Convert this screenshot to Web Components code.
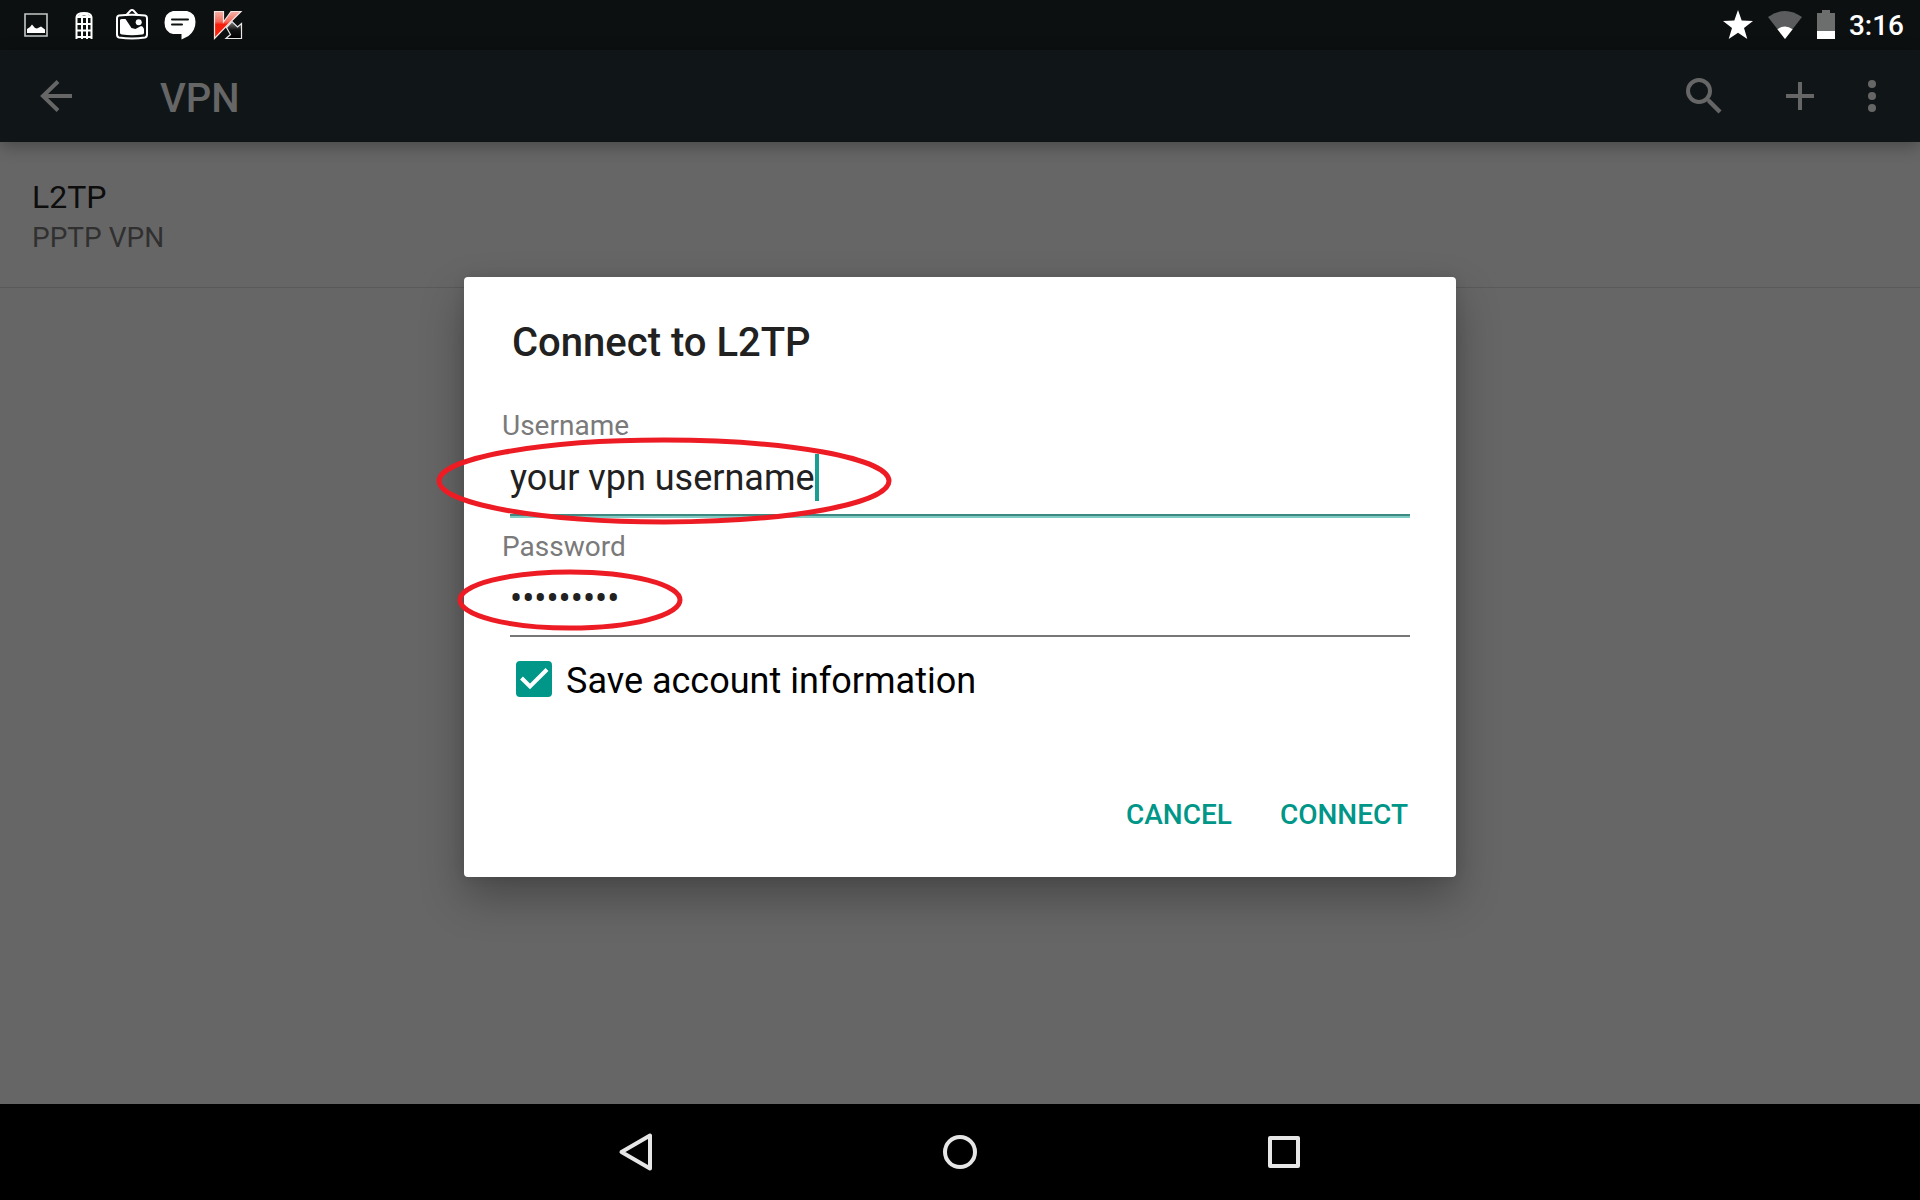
<!DOCTYPE html>
<html lang="en">
<head>
<meta charset="utf-8">
<title>VPN</title>
<style>
  html, body { height: 100%; margin: 0; }
  body { font-family: Roboto, "Noto Sans", sans-serif; background: #666; }
</style>
</head>
<body>
<vpn-screen></vpn-screen>

<script>
const define = (name, html, setup) => {
  const template = document.createElement('template');
  template.innerHTML = html;
  customElements.define(name, class extends HTMLElement {
    constructor() {
      super();
      this.attachShadow({ mode: 'open' }).append(template.content.cloneNode(true));
    }
    connectedCallback() {
      if (setup) setup(this, this.shadowRoot);
    }
  });
};

define('status-bar', `
  <style>
    :host { display: flex; align-items: center; justify-content: space-between; height: 50px;
      padding: 0 16px 0 20px; background: #0c1011; color: #fff; }
    .group { display: flex; align-items: center; gap: 16px; }
    .system { gap: 13px; }
    svg { display: block; }
    time { font-size: 28px; line-height: 36px; font-weight: 500; padding-top: 2px; }
  </style>
  <div class="group">
    <svg width="32" height="32" viewBox="0 0 32 32"><path d="M5 5h22v22H5z" fill="none" stroke="#c4c7c6" stroke-width="1.6"/><path d="M7 24v-4l3-2 2-2.500 3 3.500 2 .5 4-2 4 3V24z" fill="#fff"/></svg>
    <svg width="32" height="32" viewBox="0 0 32 32"><path d="M8.500 30V8Q9 4 16 4t7.500 4v22M14 30V9M19 30V9M8 8h16M8 15h16M8 21.500h16M8 28h16M10 8q6-5 12 0" fill="none" stroke="#fff" stroke-width="2"/></svg>
    <svg width="32" height="32" viewBox="0 0 32 32"><path d="M10 6.500 14.500 1.500q1.500-1 3 0L22 6.500" fill="none" stroke="#fff" stroke-width="2"/><path d="M3 6.500Q16 5.200 29 6.500q2 .3 2 3v16q0 2.500-2 3-13 2-26 0-2-.5-2-3v-16q0-2.700 2-3z" fill="none" stroke="#fff" stroke-width="2"/><path d="M4 11q.4-1 2-1h3.500l6 9 4 1 5.500-3q2 0 3 3v4q-.4 1.600-2 1.600-10 1.300-20 0-2-.2-2-1.600z" fill="#fff"/><circle cx="22.700" cy="13.300" r="3" fill="#fff"/></svg>
    <svg width="32" height="32" viewBox="0 0 32 32"><path d="M9 2h14q8.500 2 8.500 11 0 8.500-7 14l-7 3.500V25H9Q.5 23 .5 13.500T9 2z" fill="#fff"/><path d="M8 10.500h16M8 15.500h10" stroke="#0c1011" stroke-width="2" stroke-linecap="round"/></svg>
    <svg width="32" height="32" viewBox="0 0 32 32">
      <defs>
        <linearGradient id="red" x1="0" y1="0" x2="0" y2="1"><stop offset="0" stop-color="#f3b3a7"/><stop offset=".38" stop-color="#f5685a"/><stop offset=".48" stop-color="#f51e0c"/><stop offset="1" stop-color="#f42b10"/></linearGradient>
        <linearGradient id="dark" x1="0" y1="0" x2="0" y2="1"><stop offset="0" stop-color="#888"/><stop offset=".5" stop-color="#111"/><stop offset="1" stop-color="#000"/></linearGradient>
      </defs>
      <path d="M14.500 18.500 20 12.500l5.500 5.500 4-3.500v15H14l4.500-4z" fill="url(#dark)" stroke="#e8e8e8" stroke-width="1.200"/>
      <path d="M2.500 2.500h9V13l7.500-10.500h10L15 16.500 2.500 29.500z" fill="url(#red)" stroke="#f5e6e3" stroke-width="1.200"/>
    </svg>
  </div>
  <div class="group system">
    <svg width="32" height="32" viewBox="0 0 32 32"><path d="M16 1l3.700 10.600L31 12l-9 7 3.300 11L16 23.700 6.700 30 10 19l-9-7 11.300-.4z" fill="#fff"/></svg>
    <svg width="36" height="32" viewBox="0 0 36 32"><path d="M1 8Q18-4 35 8L18 30z" fill="#5a5c5d"/><path d="M10.400 20.200q7.600-5.200 15.200 0L18 30z" fill="#fff"/></svg>
    <svg width="20" height="32" viewBox="0 0 20 32"><path d="M6 1h8v3h5v18H1V4h5z" fill="#6c6e6e"/><path d="M1 22h18v8H1z" fill="#fff"/></svg>
    <time>3:16</time>
  </div>
`);

define('app-bar', `
  <style>
    :host { display: flex; align-items: center; position: relative; height: 92px; padding: 0 24px;
      background: #101517; color: #666; box-shadow: 0 4px 16px rgba(0,0,0,.3); }
    button { border: 0; padding: 0; background: none; color: inherit; display: block; }
    svg { display: block; }
    h1 { flex: 1; margin: 0 0 0 72px; padding-top: 5px; font-size: 40px; line-height: 48px; font-weight: 500; }
    .actions { display: flex; align-items: center; gap: 48px; }
    .more { margin-left: -24px; }
  </style>
  <button aria-label="Back"><svg width="64" height="48" viewBox="0 0 64 48"><path d="M48 24H19M34 9.500 19 24l15 14.500" fill="none" stroke="#666" stroke-width="4"/></svg></button>
  <h1><slot></slot></h1>
  <div class="actions">
    <button aria-label="Search"><svg width="48" height="48" viewBox="0 0 48 48"><circle cx="19" cy="19" r="11" fill="none" stroke="#666" stroke-width="4"/><path d="m28 27.500 2 .5 10.500 10.500-2 2L28 30z" fill="#666" stroke="#666" stroke-width="1.500"/></svg></button>
    <button aria-label="Add"><svg width="48" height="48" viewBox="0 0 48 48"><path d="M24 10v28M10 24h28" stroke="#666" stroke-width="4"/></svg></button>
    <button class="more" aria-label="More options"><svg width="48" height="48" viewBox="0 0 48 48" fill="#666"><circle cx="24" cy="12" r="4"/><circle cx="24" cy="24" r="4"/><circle cx="24" cy="36" r="4"/></svg></button>
  </div>
`);

define('vpn-item', `
  <style>
    :host { display: block; padding: 35px 32px 29px; border-bottom: 1px solid #5a5a5a; }
    .name { font-size: 32px; line-height: 40px; color: #0d0d0d; }
    .kind { font-size: 28px; line-height: 40px; color: #303030; padding-top: 1px; }
  </style>
  <div class="name"><slot name="name"></slot></div>
  <div class="kind"><slot></slot></div>
`);

define('text-field', `
  <style>
    :host { display: block; position: relative; padding-left: 10px; }
    label { display: block; margin-left: -8px; font-size: 28px; line-height: 36px; color: #7a7a7a; }
    .row { display: flex; margin-top: 10px; padding-bottom: 12px; border-bottom: 2px solid #777; margin-bottom: 2px; }
    input { flex: 1; min-width: 0; height: 48px; padding: 0; border: 0; outline: 0; background: none;
      font: 36px/48px Roboto, "Noto Sans", sans-serif; color: #212121; }
    .caret { display: none; width: 4px; height: 47px; background: #1b9e92; }
    :host([active]) .row { border-color: #3d8a82; box-shadow: 0 2px #80cbc4; }
    :host([active]) input { flex: none; field-sizing: content; }
    :host([active]) .caret { display: block; }
    .mark { position: absolute; overflow: visible; pointer-events: none; }
    .mark ellipse { fill: none; stroke: #ed1c24; stroke-width: 5; }
    .wide { left: -64px; top: 30px; width: 454px; height: 87px; }
    .small { left: -42px; top: 41px; width: 225px; height: 61px; }
    :host([active]) .small, :host(:not([active])) .wide { display: none; }
  </style>
  <label for="field"><slot></slot></label>
  <div class="row"><input id="field" spellcheck="false" autocomplete="off"><span class="caret"></span></div>
  <svg class="mark wide"><ellipse cx="228" cy="43" rx="225" ry="41"/></svg>
  <svg class="mark small"><ellipse cx="112" cy="30" rx="110" ry="28"/></svg>
`, (host, root) => {
  const input = root.querySelector('input');
  input.type = host.getAttribute('type') || 'text';
  input.value = host.getAttribute('value') || '';
});

define('check-option', `
  <style>
    :host { display: block; }
    label { display: flex; align-items: flex-start; gap: 14px; font-size: 36px; line-height: 48px; color: #000; }
    .box { display: grid; padding-top: 4px; }
    .box > * { grid-area: 1 / 1; margin: 0; width: 36px; height: 36px; }
    input { appearance: none; border: 4px solid #757575; border-radius: 4px; }
    input:checked { background: #009688; border-color: #009688; }
    svg { pointer-events: none; visibility: hidden; }
    input:checked + svg { visibility: visible; }
  </style>
  <label><span class="box"><input type="checkbox" checked><svg viewBox="0 0 36 36"><path d="M5.500 17 14 25.500 31 8.500" fill="none" stroke="#fff" stroke-width="4"/></svg></span><slot></slot></label>
`);

define('text-button', `
  <style>
    :host { display: block; }
    button { border: 0; padding: 0; background: none; color: #009688;
      font: 500 28px/36px Roboto, "Noto Sans", sans-serif; display: block; }
  </style>
  <button><slot></slot></button>
`);

define('modal-dialog', `
  <style>
    :host { position: absolute; inset: 50px 0 96px; display: flex; align-items: center; justify-content: center; }
    section { box-sizing: border-box; width: 992px; max-width: 90%; padding: 42px 46px 44px 36px;
      background: #fff; border-radius: 4px; box-shadow: 0 20px 44px rgba(0,0,0,.3), 0 0 12px rgba(0,0,0,.1); }
    h2 { margin: 0 0 41px 12px; font-size: 40px; line-height: 48px; font-weight: 500; color: #212121; }
    .fields { display: flex; flex-direction: column; gap: 11px; }
    ::slotted(check-option) { margin: 7px 0 0 16px; }
    footer { display: flex; justify-content: flex-end; gap: 48px; margin-top: 92px; padding-right: 2px; }
  </style>
  <section role="dialog" aria-labelledby="title">
    <h2 id="title"><slot name="title"></slot></h2>
    <div class="fields"><slot></slot></div>
    <footer><slot name="action"></slot></footer>
  </section>
`);

define('nav-bar', `
  <style>
    :host { display: flex; align-items: center; justify-content: center; gap: 276px; height: 96px; background: #000; }
    button { border: 0; padding: 0; background: none; display: block; }
    svg { display: block; fill: none; stroke: #e6e6e6; stroke-width: 4; stroke-linejoin: round; }
  </style>
  <button aria-label="Back"><svg width="48" height="48" viewBox="0 0 48 48"><path d="M38 7.500v33L9.500 24z"/></svg></button>
  <button aria-label="Home"><svg width="48" height="48" viewBox="0 0 48 48"><circle cx="24" cy="24" r="15"/></svg></button>
  <button aria-label="Recent apps"><svg width="48" height="48" viewBox="0 0 48 48"><path d="M10 10h28v28H10z"/></svg></button>
`);

define('vpn-screen', `
  <style>
    :host { position: relative; display: flex; flex-direction: column; min-height: 100vh; overflow: hidden; }
    main { flex: 1; }
    nav-bar { position: relative; }
  </style>
  <status-bar></status-bar>
  <app-bar>VPN</app-bar>
  <main><vpn-item><span slot="name">L2TP</span>PPTP VPN</vpn-item></main>
  <nav-bar></nav-bar>
  <modal-dialog>
    <span slot="title">Connect to L2TP</span>
    <text-field active value="your vpn username">Username</text-field>
    <text-field type="password" value="secretkey">Password</text-field>
    <check-option>Save account information</check-option>
    <text-button slot="action">CANCEL</text-button>
    <text-button slot="action">CONNECT</text-button>
  </modal-dialog>
`);
</script>
</body>
</html>
